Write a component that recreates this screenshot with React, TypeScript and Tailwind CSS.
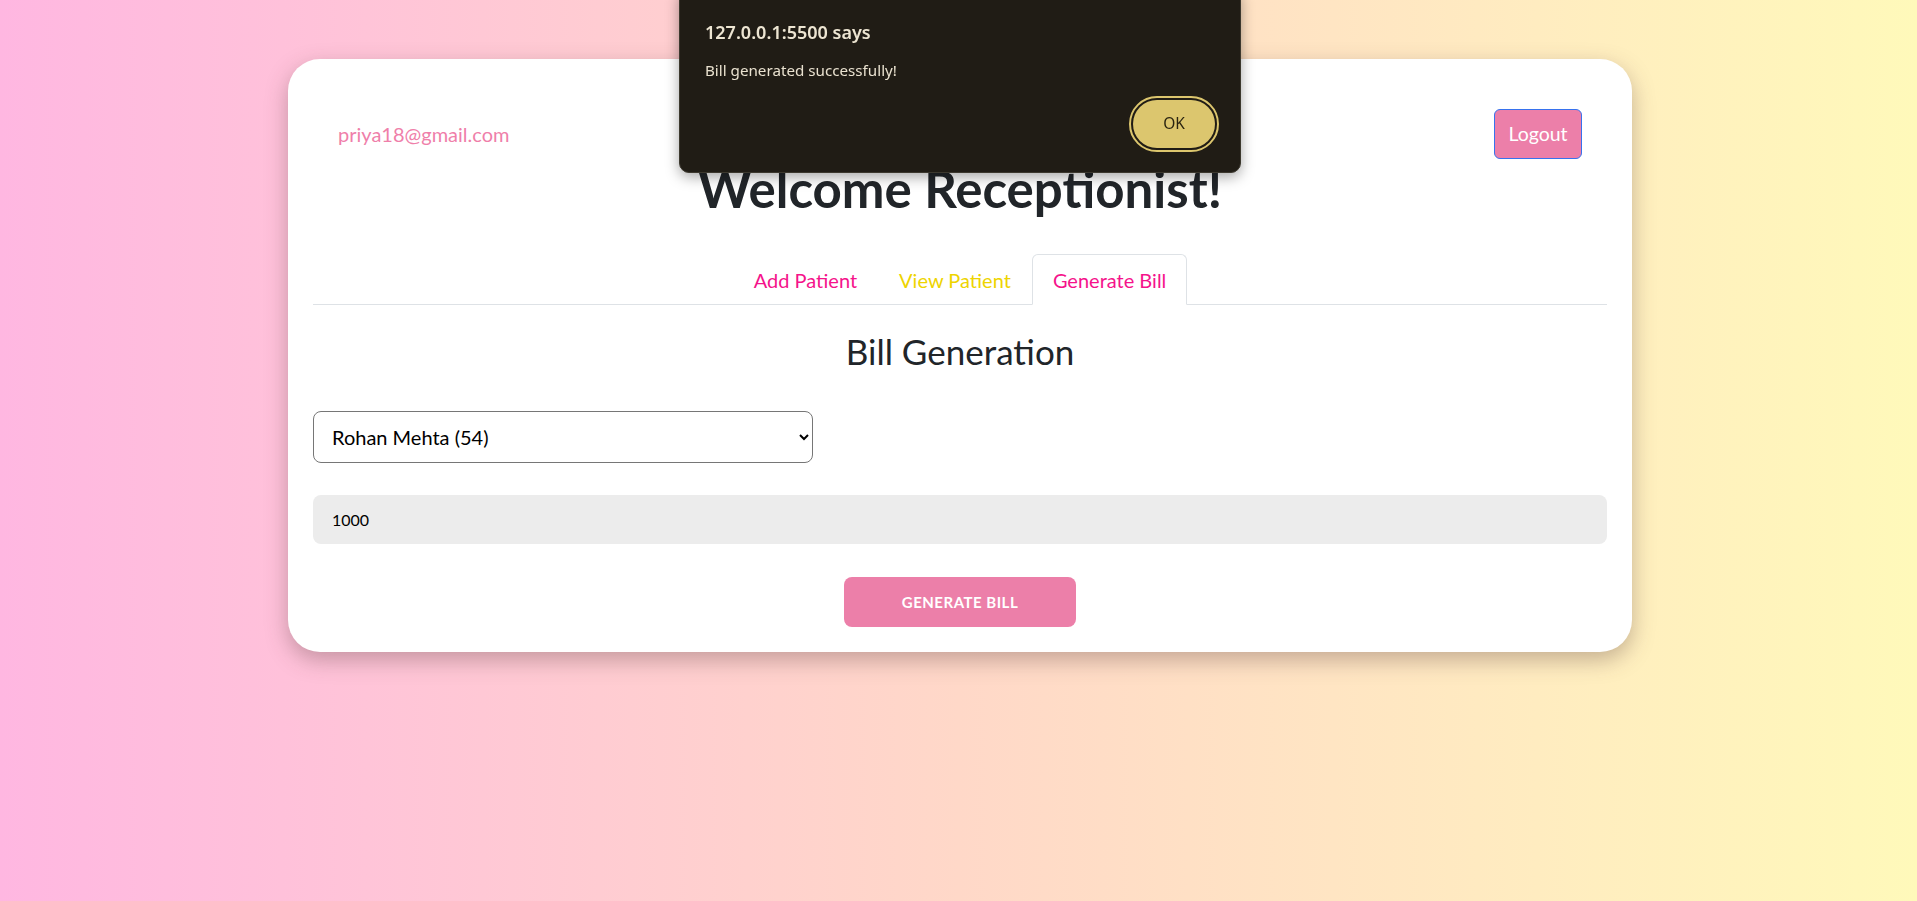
import { useState } from "react";

const tabs = [
    { label: "Add Patient", color: "text-[#f5138b]" },
    { label: "View Patient", color: "text-[#eed400]" },
    { label: "Generate Bill", color: "text-[#f5138b]" },
];

function AlertBox() {
    return (
        <div className="fixed left-[679px] top-[-12px] w-[562px] h-[185px] rounded-[10px] bg-[#201c15] border border-[#3c382e] shadow-[0_4px_14px_rgba(0,0,0,0.35)] font-['Noto_Sans',sans-serif]">
            <div className="pl-[25px] pt-[28px]">
                <p className="text-[18px] font-semibold leading-[30px] text-[#ede5d2]">127.0.0.1:5500 says</p>
                <p className="mt-[13px] text-[15.2px] leading-[20px] text-[#e9e1cf]">Bill generated successfully!</p>
            </div>
            <div className="absolute right-[25px] bottom-[24px]">
                <button className="w-[82px] h-[48px] rounded-full bg-[#dcc66e] text-[15.5px] text-[#2b2511] outline-2 outline-[#dcc66e] outline-offset-2">
                    OK
                </button>
            </div>
        </div>
    );
}

export default function App() {
    const [active] = useState(2);

    return (
        <div className="min-h-screen w-full bg-linear-to-r from-[#ffb7e1] via-[#ffd8c8] to-[#fff9ba] pt-[59px] pl-[3px] font-['Lato',sans-serif]">
            <div className="w-[1344px] mx-auto bg-white rounded-[32px] p-[25px] shadow-[0_8px_22px_rgba(90,60,60,0.35)]">
                <div className="flex justify-between items-center px-[25px] pt-[25px]">
                    <span className="text-[20px] text-[#ef7faa]">priya18@gmail.com</span>
                    <button className="w-[88px] h-[50px] rounded-[6px] bg-[#ec7fa9] border border-[#3772ee] text-white text-[19.5px]">
                        Logout
                    </button>
                </div>

                <h1 className="mt-[1px] text-center text-[51px] leading-[58px] font-bold text-[#212529]">Welcome Receptionist!</h1>

                <ul className="mt-[36px] flex justify-center border-b border-[#dee2e6]">
                    {tabs.map((t, i) => (
                        <li
                            key={t.label}
                            className={
                                i === active
                                    ? "-mb-px h-[51px] px-[20px] flex items-center rounded-t-[6px] border border-[#dee2e6] border-b-white bg-white text-[20px] " + t.color
                                    : "-mb-px h-[51px] px-[20px] flex items-center border border-transparent text-[20px] " + t.color
                            }
                        >
                            {t.label}
                        </li>
                    ))}
                </ul>

                <h2 className="mt-[25px] text-center text-[35px] leading-[1.2] text-[#212529]">Bill Generation</h2>

                <select
                    defaultValue="54"
                    className="mt-[39px] block w-[500px] h-[52px] rounded-[8px] border border-[#767676] bg-white pl-[14px] pr-[10px] text-[20px] text-black"
                >
                    <option value="54">Rohan Mehta (54)</option>
                </select>

                <input
                    defaultValue="1000"
                    className="mt-[32px] block w-full h-[49px] rounded-[8px] bg-[#ececec] px-[19px] text-[16px] text-black outline-none"
                />

                <div className="mt-[33px] flex justify-center">
                    <button className="w-[232px] h-[50px] rounded-[8px] bg-[#ec7fa9] text-white text-[15px] font-bold uppercase tracking-[0.5px]">
                        Generate Bill
                    </button>
                </div>
            </div>

            <AlertBox />
        </div>
    );
}
